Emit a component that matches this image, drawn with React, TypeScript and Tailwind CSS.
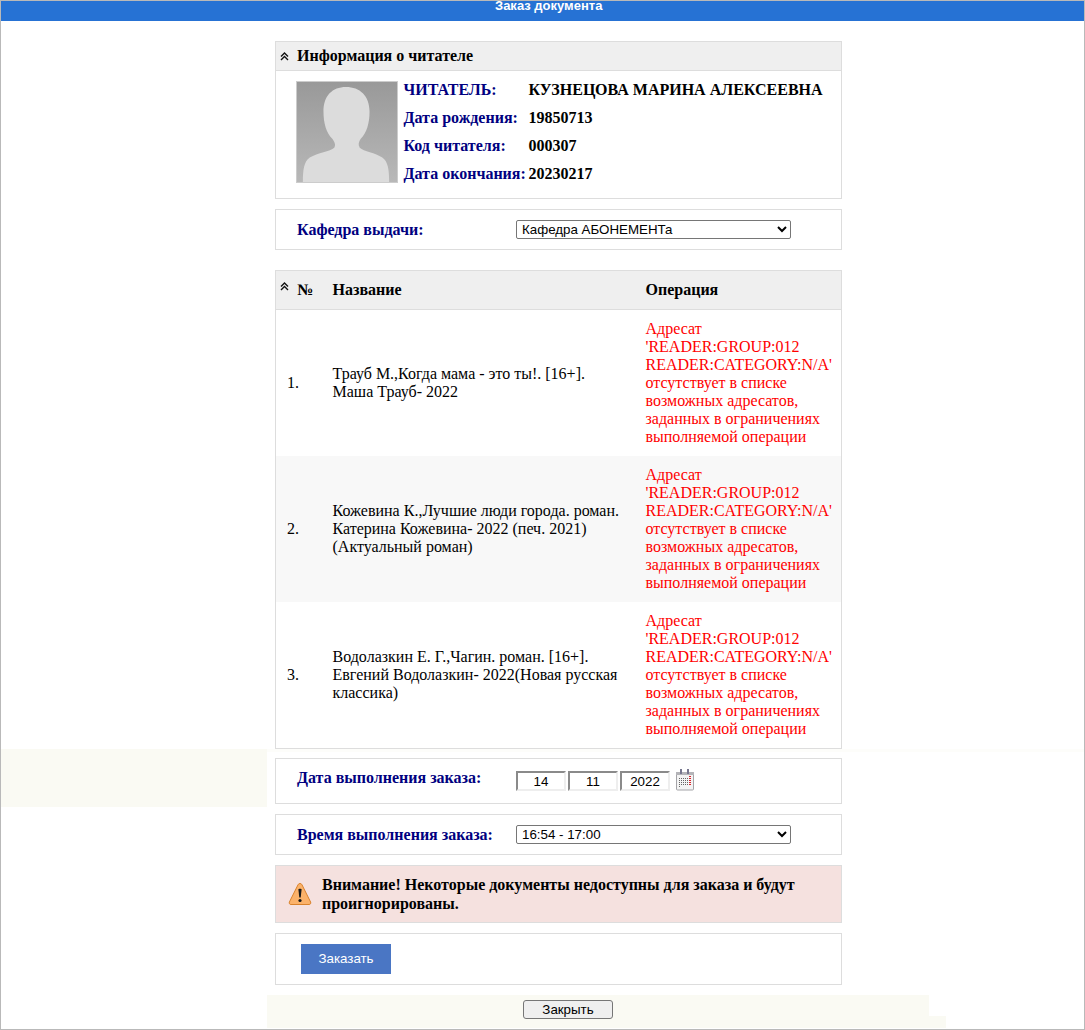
const Chevrons = () => (
  <svg width="9" height="9" viewBox="0 0 9 9" className="shrink-0">
    <path d="M1 4.5 L4.5 1 L8 4.5 M1 8 L4.5 4.5 L8 8" fill="none" stroke="#111" strokeWidth="1.4" />
  </svg>
);

const rows = [
  { n: "1.", title: <>Трауб М.,Когда мама - это ты!. [16+].<br />Маша Трауб- 2022</>, bg: "bg-white" },
  { n: "2.", title: <>Кожевина К.,Лучшие люди города. роман.<br />Катерина Кожевина- 2022 (печ. 2021)<br />(Актуальный роман)</>, bg: "bg-[#f8f8f8]" },
  { n: "3.", title: <>Водолазкин Е. Г.,Чагин. роман. [16+].<br />Евгений Водолазкин- 2022(Новая русская<br />классика)</>, bg: "bg-white" },
];

const reader = [
  ["ЧИТАТЕЛЬ:", "КУЗНЕЦОВА МАРИНА АЛЕКСЕЕВНА"],
  ["Дата рождения:", "19850713"],
  ["Код читателя:", "000307"],
  ["Дата окончания:", "20230217"],
];

const panel = "ml-[274px] w-[567px] border border-[#dddddd] box-border";
const dateInput = "w-[50px] h-[20px] box-border border-2 border-t-[#8a8a8a] border-l-[#8a8a8a] border-r-[#eeeeee] border-b-[#eeeeee] text-center text-[13.33px] text-black bg-white font-['Liberation_Sans',sans-serif]";

export default function App() {
  return (
    <div className="relative h-[1030px] w-[1085px] box-border overflow-hidden border border-[#b9b9b9] bg-white font-['Liberation_Serif',serif] text-[16px] leading-[18px] text-black">
      <div className="absolute left-0 top-[748px] h-[58px] w-[266px] bg-[#fafaf3]" />
      <div className="absolute left-[266px] top-[748px] h-[3px] w-[818px] bg-[#fdfdfa]" />

      <header className="h-5 overflow-hidden bg-[#2672d4] pl-[494px] font-['Liberation_Sans',sans-serif] text-[13px] font-bold leading-[9px] text-white">
        Заказ документа
      </header>

      <div className="relative">
        <section className={`${panel} mt-5 h-[158px]`}>
          <div className="flex h-[29px] items-center gap-[8px] border-b border-[#dddddd] bg-[#efefef] pl-[4px] font-bold">
            <Chevrons />
            <span>Информация о читателе</span>
          </div>
          <div className="flex pl-5 pt-[10px]">
            <svg width="102" height="102" viewBox="0 0 102 102" className="shrink-0 border border-[#cccccc]">
              <defs>
                <linearGradient id="ph" x1="0" y1="0" x2="0" y2="1">
                  <stop offset="0" stopColor="#999999" />
                  <stop offset="1" stopColor="#b8b8b8" />
                </linearGradient>
              </defs>
              <rect width="102" height="102" fill="url(#ph)" />
              <path d="M6 102 C6 90 7 81 13 77 C21 72 34 71 38 67 C40 64 38 61 36 58 C30 52 27 42 27 30 C27 14 36 5 50 5 C64 5 74 14 74 30 C74 42 71 52 65 58 C63 61 62 64 64 67 C68 71 80 72 87 77 C93 81 94 90 94 102 Z" fill="#dcdcdc" />
            </svg>
            <div className="-mt-[5px] ml-[5.5px] grid auto-rows-[28px] grid-cols-[125px_1fr] items-center font-bold">
              {reader.map(([k, v]) => (
                <div key={k} className="contents">
                  <span className="whitespace-nowrap text-[#000080]">{k}</span>
                  <span className="whitespace-nowrap">{v}</span>
                </div>
              ))}
            </div>
          </div>
        </section>

        <section className={`${panel} mt-[10px] flex h-[41px] items-center pl-[21px]`}>
          <span className="w-[219px] font-bold text-[#000080]">Кафедра выдачи:</span>
          <select className="h-[19px] w-[275px] rounded-[2px] border border-[#767676] bg-white pl-[1px] font-['Liberation_Sans',sans-serif] text-[13.33px] leading-[15px]">
            <option>Кафедра АБОНЕМЕНТа</option>
          </select>
        </section>

        <section className={`${panel} mt-5 h-[479px]`}>
          <div className="flex h-[39px] items-center border-b border-[#dddddd] bg-[#efefef] font-bold">
            <div className="flex w-[56.5px] items-center gap-[8px] pl-[4px]">
              <span className="-mt-[7px] flex"><Chevrons /></span>
              <span>№</span>
            </div>
            <div className="w-[313px]">Название</div>
            <div>Операция</div>
          </div>
          {rows.map((r) => (
            <div key={r.n} className={`flex h-[146px] items-center ${r.bg}`}>
              <div className="w-[56.5px] pl-[11px]">{r.n}</div>
              <div className="w-[313px] whitespace-nowrap">{r.title}</div>
              <div className="whitespace-nowrap text-[#ff0000]">
                Адресат<br />'READER:GROUP:012<br />READER:CATEGORY:N/A'<br />отсутствует в списке<br />возможных адресатов,<br />заданных в ограничениях<br />выполняемой операции
              </div>
            </div>
          ))}
        </section>

        <section className={`${panel} mt-[9px] flex h-[46px] items-center pl-[21px]`}>
          <span className="-mt-[6px] w-[219px] font-bold text-[#000080]">Дата выполнения заказа:</span>
          <div className="flex items-center gap-[2px]">
            <input className={dateInput} defaultValue="14" />
            <input className={dateInput} defaultValue="11" />
            <input className={dateInput} defaultValue="2022" />
            <svg width="20" height="22" viewBox="0 0 20 22" className="-mt-[2px] ml-[3px]">
              <rect x="1.5" y="3.5" width="17" height="17.5" rx="1" fill="#f4f4f4" stroke="#a4a4a8" />
              <rect x="1" y="3" width="18" height="3" fill="#b4b4b8" />
              <rect x="5" y="0" width="2" height="5" fill="#77778f" />
              <rect x="12" y="0" width="2" height="5" fill="#77778f" />
              <g fill="#666666">
                {[9, 11, 13, 15].map((y) =>
                  [4, 6, 8, 10, 12].map((x) => <rect key={`${x}-${y}`} x={x} y={y} width="1" height="1" />)
                )}
                <rect x="4" y="17" width="1" height="1" />
              </g>
              <g fill="#d8222a">
                {[7, 9, 11, 13, 15].map((y) => (
                  <rect key={y} x="14" y={y} width="2" height="1" />
                ))}
              </g>
            </svg>
          </div>
        </section>

        <section className={`${panel} mt-[10px] flex h-[41px] items-center pl-[21px]`}>
          <span className="w-[219px] font-bold text-[#000080]">Время выполнения заказа:</span>
          <select className="h-[19px] w-[275px] rounded-[2px] border border-[#767676] bg-white pl-[1px] font-['Liberation_Sans',sans-serif] text-[13.33px] leading-[15px]">
            <option>16:54 - 17:00</option>
          </select>
        </section>

        <section className={`${panel} mt-[10px] flex h-[58px] items-center bg-[#f5e1df] pl-[13px]`}>
          <svg width="24" height="24" viewBox="0 0 24 24" className="-ml-[1px] shrink-0">
            <path d="M12 1.5 C13 1.5 13.6 2 14 2.8 L22.6 20 C23.2 21.4 22.4 22.5 21 22.5 L3 22.5 C1.6 22.5 0.8 21.4 1.4 20 L10 2.8 C10.4 2 11 1.5 12 1.5 Z" fill="#fbb26a" stroke="#d9822b" strokeWidth="1" />
            <path d="M10.4 7.5 C10.4 6.4 13.6 6.4 13.6 7.5 L12.7 15.5 L11.3 15.5 Z" fill="#1a1a1a" />
            <circle cx="12" cy="18.5" r="1.6" fill="#1a1a1a" />
          </svg>
          <p className="ml-[10px] w-[500px] font-bold leading-[19px]">
            Внимание! Некоторые документы недоступны для заказа и будут проигнорированы.
          </p>
        </section>

        <section className={`${panel} mt-[10px] h-[52px] pl-[25px] pt-[10px]`}>
          <button className="h-[30px] w-[90px] bg-[#4a76c4] font-['Liberation_Sans',sans-serif] text-[13.33px] text-white">
            Заказать
          </button>
        </section>

        <footer className="relative ml-[266px] mt-[10px] flex h-[33px] w-[662px] bg-[#fafaf3] pl-[256px] pt-[5px]">
          <div className="absolute left-[662px] top-[21px] h-[12px] w-[17px] bg-[#fafaf3]" />
          <button className="h-[19px] w-[90px] rounded-[3px] border border-[#767676] bg-[#efefef] font-['Liberation_Sans',sans-serif] text-[13.33px] leading-[15px] text-black">
            Закрыть
          </button>
        </footer>
      </div>
    </div>
  );
}
